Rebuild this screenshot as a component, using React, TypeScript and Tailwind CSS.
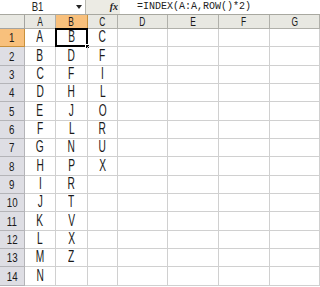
import React from "react";

const colA = "ABCDEFGHIJKLMN".split("");
const colB = "BDFHJLNPRTVXZ".split("");
const colC = "CFILORUX".split("");
const headers = ["A", "B", "C", "D", "E", "F", "G"];

const sans = { fontFamily: '"Liberation Sans", Arial, sans-serif' };

const App: React.FC = () => {
  const rows = Array.from({ length: 14 }, (_, i) => i);

  return (
    <div className="w-[320px] h-[287px] overflow-hidden bg-white select-none">
      {/* formula bar */}
      <div className="flex h-[15px] border-b border-[#a8a8a0] bg-[#ecebe4]">
        <div className="relative flex w-[86px] items-center justify-center bg-white border-r border-[#b8b8b0]">
          <span className="inline-block scale-x-[0.8] pr-[12px] text-[12px] leading-none text-[#222]" style={sans}>B1</span>
          <span className="absolute right-[3px] top-[5px] h-0 w-0 border-x-[3px] border-t-[4px] border-x-transparent border-t-[#222]" />
        </div>
        <div className="flex w-[34px] items-center justify-end pr-[2px]">
          <span className="text-[10px] font-bold italic leading-none text-[#222]" style={{ fontFamily: '"Liberation Serif", serif' }}>fx</span>
        </div>
        <div className="flex flex-1 items-center bg-white pl-[17px]">
          <span className="text-[10px] leading-none text-[#222]" style={{ fontFamily: '"Liberation Mono", monospace' }}>=INDEX(A:A,ROW()*2)</span>
        </div>
      </div>

      {/* sheet */}
      <div className="grid grid-cols-[25px_31px_32px_30px_50px_51px_51px_1fr] grid-rows-[14px_repeat(14,18.33px)] text-[#1a1a1a]">
        <div className="border-r border-b border-[#a4a4a0] bg-[#e8e8e2]" />
        {headers.map((h) => (
          <div
            key={h}
            className={
              h === "B"
                ? "flex items-center justify-center border-r border-b border-[#c8903c] bg-[#f8c07c] text-[12px] leading-none"
                : "flex items-center justify-center border-r border-b border-[#b0b0aa] bg-[#e8e8e2] text-[12px] leading-none"
            }
            style={sans}
          >
            <span className="inline-block scale-x-[0.7]">{h}</span>
          </div>
        ))}

        {rows.map((r) => (
          <React.Fragment key={r}>
            <div
              className={
                r === 0
                  ? "flex items-end justify-center pb-[2px] border-r border-b border-[#c8903c] bg-[#f8c07c] text-[13px] leading-none"
                  : "flex items-end justify-center pb-[2px] border-r border-b border-[#b4b4b8] bg-[#dedee4] text-[13px] leading-none"
              }
              style={sans}
            >
              <span className="inline-block scale-x-[0.75]">{r + 1}</span>
            </div>
            {[colA[r], colB[r], colC[r], "", "", "", ""].map((v, c) => (
              <div
                key={c}
                className="relative flex items-end justify-center pb-[1px] border-r border-b border-[#d0d0d0] text-[17px] leading-none"
                style={sans}
              >
                <span className="inline-block scale-x-[0.6]">{v}</span>
                {r === 0 && c === 1 && (
                  <>
                    <span className="absolute -left-[1px] -top-[1px] right-[-1px] bottom-[-1px] border-2 border-black" />
                    <span className="absolute right-[-3px] bottom-[-3px] h-[5px] w-[5px] bg-black border border-white" />
                  </>
                )}
              </div>
            ))}
          </React.Fragment>
        ))}
      </div>
    </div>
  );
};

export default App;
